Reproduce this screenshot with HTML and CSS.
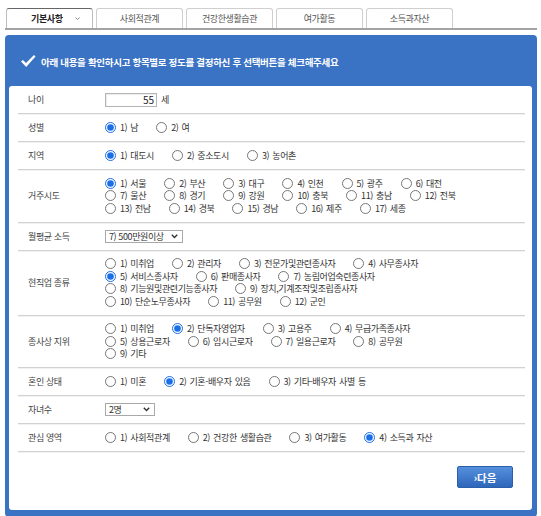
FILE: index.html
```html
<!DOCTYPE html>
<html lang="ko">
<head>
    <meta charset="UTF-8">
    <meta name="viewport" content="width=device-width, initial-scale=1.0">
    <title>기본사항</title>
    <link rel="stylesheet" href="styles.css">
</head>
<body>
    <ul class="tabs">
        <li class="tab active">기본사항 <svg class="tab-arrow" width="5" height="3" viewBox="0 0 5 3"><path d="M0.5 0.5 L2.5 2.5 L4.5 0.5" fill="none" stroke="#888" stroke-width="1"/></svg></li>
        <li class="tab">사회적관계</li>
        <li class="tab">건강한생활습관</li>
        <li class="tab">여가활동</li>
        <li class="tab">소득과자산</li>
    </ul>

    <div class="panel">
        <div class="panel-head">
            <svg class="check" width="16" height="14" viewBox="0 0 16 14">
                <path d="M1 7.5 L3 6 L6 9 L14 1 L15.5 2.5 L6.2 13 Z" fill="#fff"/>
            </svg>
            <span>아래 내용을 확인하시고 항목별로 정도를 결정하신 후 선택버튼을 체크해주세요</span>
        </div>

        <div class="sheet">
            <div class="row">
                <div class="label">나이</div>
                <div class="field">
                    <div class="line">
                        <input class="age" type="text" value="55"><span class="unit">세</span>
                    </div>
                </div>
            </div>

            <div class="row">
                <div class="label">성별</div>
                <div class="field">
                    <div class="line">
                        <label class="opt"><input type="radio" name="sex" checked>1) 남</label>
                        <label class="opt"><input type="radio" name="sex">2) 여</label>
                    </div>
                </div>
            </div>

            <div class="row">
                <div class="label">지역</div>
                <div class="field">
                    <div class="line">
                        <label class="opt"><input type="radio" name="area" checked>1) 대도시</label>
                        <label class="opt"><input type="radio" name="area">2) 중소도시</label>
                        <label class="opt"><input type="radio" name="area">3) 농어촌</label>
                    </div>
                </div>
            </div>

            <div class="row">
                <div class="label">거주시도</div>
                <div class="field">
                    <div class="line">
                        <label class="opt"><input type="radio" name="city" checked>1) 서울</label>
                        <label class="opt"><input type="radio" name="city">2) 부산</label>
                        <label class="opt"><input type="radio" name="city">3) 대구</label>
                        <label class="opt"><input type="radio" name="city">4) 인천</label>
                        <label class="opt"><input type="radio" name="city">5) 광주</label>
                        <label class="opt"><input type="radio" name="city">6) 대전</label>
                    </div>
                    <div class="line">
                        <label class="opt"><input type="radio" name="city">7) 울산</label>
                        <label class="opt"><input type="radio" name="city">8) 경기</label>
                        <label class="opt"><input type="radio" name="city">9) 강원</label>
                        <label class="opt"><input type="radio" name="city">10) 충북</label>
                        <label class="opt"><input type="radio" name="city">11) 충남</label>
                        <label class="opt"><input type="radio" name="city">12) 전북</label>
                    </div>
                    <div class="line">
                        <label class="opt"><input type="radio" name="city">13) 전남</label>
                        <label class="opt"><input type="radio" name="city">14) 경북</label>
                        <label class="opt"><input type="radio" name="city">15) 경남</label>
                        <label class="opt"><input type="radio" name="city">16) 제주</label>
                        <label class="opt"><input type="radio" name="city">17) 세종</label>
                    </div>
                </div>
            </div>

            <div class="row">
                <div class="label">월평균 소득</div>
                <div class="field">
                    <div class="line">
                        <span class="select income">
                            <select><option>7) 500만원이상</option></select>
                            <svg class="chev" width="7" height="5" viewBox="0 0 7 5"><path d="M0.8 0.8 L3.5 3.6 L6.2 0.8" fill="none" stroke="#333" stroke-width="1.4"/></svg>
                        </span>
                    </div>
                </div>
            </div>

            <div class="row">
                <div class="label">현직업 종류</div>
                <div class="field">
                    <div class="line">
                        <label class="opt"><input type="radio" name="job">1) 미취업</label>
                        <label class="opt"><input type="radio" name="job">2) 관리자</label>
                        <label class="opt"><input type="radio" name="job">3) 전문가및관련종사자</label>
                        <label class="opt"><input type="radio" name="job">4) 사무종사자</label>
                    </div>
                    <div class="line">
                        <label class="opt"><input type="radio" name="job" checked>5) 서비스종사자</label>
                        <label class="opt"><input type="radio" name="job">6) 판매종사자</label>
                        <label class="opt"><input type="radio" name="job">7) 농림어업숙련종사자</label>
                    </div>
                    <div class="line">
                        <label class="opt"><input type="radio" name="job">8) 기능원및관련기능종사자</label>
                        <label class="opt"><input type="radio" name="job">9) 장치,기계조작및조립종사자</label>
                    </div>
                    <div class="line">
                        <label class="opt"><input type="radio" name="job">10) 단순노무종사자</label>
                        <label class="opt"><input type="radio" name="job">11) 공무원</label>
                        <label class="opt"><input type="radio" name="job">12) 군인</label>
                    </div>
                </div>
            </div>

            <div class="row">
                <div class="label">종사상 지위</div>
                <div class="field">
                    <div class="line">
                        <label class="opt"><input type="radio" name="status">1) 미취업</label>
                        <label class="opt"><input type="radio" name="status" checked>2) 단독자영업자</label>
                        <label class="opt"><input type="radio" name="status">3) 고용주</label>
                        <label class="opt"><input type="radio" name="status">4) 무급가족종사자</label>
                    </div>
                    <div class="line">
                        <label class="opt"><input type="radio" name="status">5) 상용근로자</label>
                        <label class="opt"><input type="radio" name="status">6) 임시근로자</label>
                        <label class="opt"><input type="radio" name="status">7) 일용근로자</label>
                        <label class="opt"><input type="radio" name="status">8) 공무원</label>
                    </div>
                    <div class="line">
                        <label class="opt"><input type="radio" name="status">9) 기타</label>
                    </div>
                </div>
            </div>

            <div class="row">
                <div class="label">혼인 상태</div>
                <div class="field">
                    <div class="line">
                        <label class="opt"><input type="radio" name="marry">1) 미혼</label>
                        <label class="opt"><input type="radio" name="marry" checked>2) 기혼-배우자 있음</label>
                        <label class="opt"><input type="radio" name="marry">3) 기타-배우자 사별 등</label>
                    </div>
                </div>
            </div>

            <div class="row">
                <div class="label">자녀수</div>
                <div class="field">
                    <div class="line">
                        <span class="select kids">
                            <select><option>2명</option></select>
                            <svg class="chev" width="7" height="5" viewBox="0 0 7 5"><path d="M0.8 0.8 L3.5 3.6 L6.2 0.8" fill="none" stroke="#333" stroke-width="1.4"/></svg>
                        </span>
                    </div>
                </div>
            </div>

            <div class="row">
                <div class="label">관심 영역</div>
                <div class="field">
                    <div class="line">
                        <label class="opt"><input type="radio" name="interest">1) 사회적관계</label>
                        <label class="opt"><input type="radio" name="interest">2) 건강한 생활습관</label>
                        <label class="opt"><input type="radio" name="interest">3) 여가활동</label>
                        <label class="opt"><input type="radio" name="interest" checked>4) 소득과 자산</label>
                    </div>
                </div>
            </div>

            <div class="actions">
                <button class="next-button" type="button">›다음</button>
            </div>
        </div>
    </div>
</body>
</html>
```

FILE: styles.css
```css
body {
    margin: 0;
    background-color: #fff;
    font-family: "Noto Sans CJK KR", "Noto Sans", sans-serif;
    font-size: 9px;
    letter-spacing: -0.4px;
    color: #333;
}
.tabs {
    display: flex;
    gap: 3px;
    list-style: none;
    margin: 8px 4px 0 5px;
    padding: 0 0 0 1px;
    border-bottom: 2px solid #a3a3a3;
}
.tab {
    width: 85px;
    height: 19px;
    display: flex;
    align-items: center;
    justify-content: center;
    border: 1px solid #cfcfcf;
    border-bottom: none;
    border-radius: 3px 3px 0 0;
    background-color: #fff;
    color: #555;
}
.tab.active {
    justify-content: flex-start;
    padding-left: 24px;
    width: 61px;
    border-color: #bdbdbd;
    border-top-color: #666;
    color: #222;
    font-weight: bold;
}
.tab-arrow {
    margin-left: 12px;
}
.panel {
    margin: 5px 4px 0 5px;
    padding: 0 5px 7px 4px;
    background-color: #3a72c4;
    border-radius: 4px;
}
.panel-head {
    height: 51px;
    padding: 3px 0 0 11px;
    box-sizing: border-box;
    display: flex;
    align-items: center;
    gap: 5px;
    color: #fff;
    font-size: 9.5px;
    letter-spacing: -0.3px;
    font-weight: bold;
}
.check {
    margin-top: -2px;
}
.sheet {
    background-color: #fff;
    border-radius: 3px;
    padding: 0 7px 22px 9px;
}
.row {
    display: flex;
    align-items: center;
    padding: 7px 0;
    border-bottom: 1px solid #d2d2d2;
    box-shadow: 0 1px 0 #f1f1f1;
}
.label {
    width: 77px;
    padding-left: 10px;
    color: #444;
}
.field {
    flex: 1;
}
.line {
    display: flex;
    align-items: center;
    height: 12.5px;
    white-space: nowrap;
}
.opt {
    display: inline-flex;
    align-items: center;
    margin-right: 18px;
    word-spacing: 1px;
}
.opt input {
    width: 11px;
    height: 11px;
    margin: 0 4px 0 0;
    accent-color: #1a6fe6;
}
.age {
    width: 52px;
    height: 14px;
    box-sizing: border-box;
    margin: 0;
    padding: 0 2px 0 0;
    border: 1px solid #b4b4b4;
    box-shadow: inset 1px 1px 1px rgba(0, 0, 0, 0.08);
    text-align: right;
    font-family: inherit;
    font-size: 10px;
    color: #222;
}
.unit {
    margin-left: 4px;
}
.select {
    position: relative;
    display: inline-block;
}
.select select {
    appearance: none;
    -webkit-appearance: none;
    height: 13px;
    box-sizing: border-box;
    margin: 0;
    padding: 0 0 0 3px;
    border: 1px solid #a9a9a9;
    border-radius: 0;
    background-color: #fff;
    font-family: inherit;
    font-size: 9px;
    letter-spacing: -0.4px;
    color: #333;
    line-height: 11px;
}
.income select {
    width: 78px;
}
.kids select {
    width: 50px;
}
.chev {
    position: absolute;
    right: 5px;
    top: 4px;
}
.actions {
    display: flex;
    justify-content: flex-end;
    padding: 14px 12px 0 0;
}
.next-button {
    width: 56px;
    height: 22px;
    border: 1px solid #2c5fa9;
    border-radius: 2px;
    background: linear-gradient(#5590dd, #2e66ba);
    color: #fff;
    font-family: inherit;
    font-size: 10.5px;
    font-weight: bold;
    letter-spacing: 0;
    cursor: pointer;
}
```
